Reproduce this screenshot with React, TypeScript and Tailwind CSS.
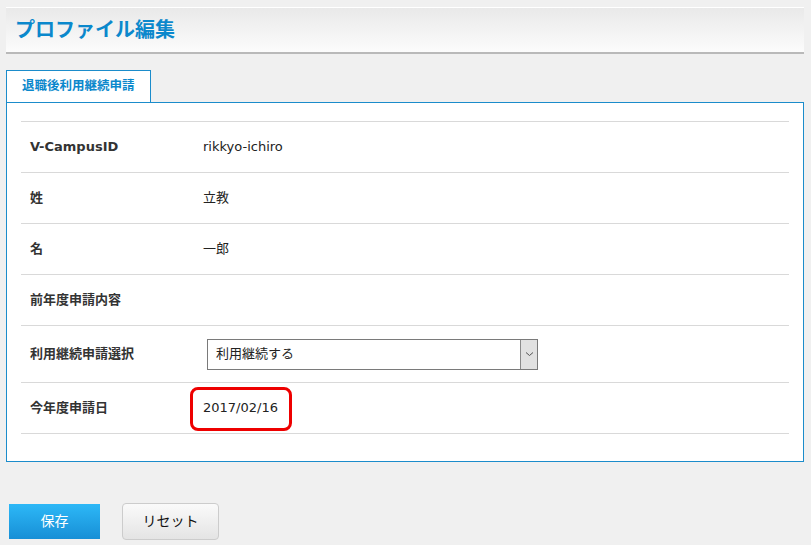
import React from "react";

const font = {
  fontFamily: '"DejaVu Sans", "Noto Sans CJK JP", sans-serif',
};

type Row = {
  label: string;
  value?: React.ReactNode;
  tall?: boolean;
  marked?: boolean;
};

function Chevron() {
  return (
    <svg width="9" height="6" viewBox="0 0 9 6" fill="none">
      <path d="M1 1.5 L4.5 4.5 L8 1.5" stroke="#555" strokeWidth="1" />
    </svg>
  );
}

function ContinueSelect() {
  return (
    <div className="ml-[4px] flex h-[31px] w-[331px] items-stretch border border-[#7a7a7a] bg-white">
      <span className="flex flex-1 items-center pl-[8px] text-[13px] text-[#222]">
        利用継続する
      </span>
      <span className="flex w-[17px] items-center justify-center border-l border-[#8a8a8a] bg-[#e1e1e1]">
        <Chevron />
      </span>
    </div>
  );
}

export default function App() {
  const rows: Row[] = [
    { label: "V-CampusID", value: "rikkyo-ichiro" },
    { label: "姓", value: "立教" },
    { label: "名", value: "一郎" },
    { label: "前年度申請内容" },
    { label: "利用継続申請選択", value: <ContinueSelect />, tall: true },
    { label: "今年度申請日", value: "2017/02/16", marked: true },
  ];

  return (
    <div className="min-h-screen bg-[#f0f0f0] pl-[6px] pr-[7px] pt-[7px]" style={font}>
      <div className="flex h-[47px] items-center border-t border-b-2 border-t-white border-b-[#b9b9b9] bg-gradient-to-b from-[#e9e9e9] to-[#fcfcfc] pl-[9px]">
        <h1 className="text-[20px] font-bold text-[#0b88cc]">プロファイル編集</h1>
      </div>

      <div className="mt-[16px] flex h-[32px] w-[145px] items-center border border-b-0 border-[#1b8ccb] bg-white pl-[15px] text-[12.5px] font-bold text-[#0b88cc]">
        退職後利用継続申請
      </div>

      <div className="border border-[#1b8ccb] bg-white px-[14px] pb-[27px] pt-[18px]">
        <div className="border-t border-[#d9d9d9]">
          {rows.map((row) => (
            <div
              key={row.label}
              className={`relative grid grid-cols-[173px_1fr] items-center border-b border-[#d9d9d9] pl-[9px] ${
                row.tall ? "h-[57px]" : "h-[51px]"
              }`}
            >
              <span className="text-[13px] font-bold text-[#333]">{row.label}</span>
              <span className="text-[13px] text-[#222]">{row.value}</span>
              {row.marked ? (
                <span className="absolute left-[169px] top-[4px] h-[44px] w-[102px] rounded-[8px] border-[3px] border-[#ee0000]" />
              ) : null}
            </div>
          ))}
        </div>
      </div>

      <div className="mt-[41px] flex items-center gap-[22px] pl-[3px]">
        <button
          type="button"
          className="h-[35px] w-[91px] bg-gradient-to-b from-[#2db8f7] to-[#178fd6] text-[14px] text-white"
        >
          保存
        </button>
        <button
          type="button"
          className="h-[37px] w-[97px] rounded-[4px] border border-[#cccccc] bg-gradient-to-b from-[#fafafa] to-[#e4e4e4] text-[14px] text-[#111]"
        >
          リセット
        </button>
      </div>
    </div>
  );
}
